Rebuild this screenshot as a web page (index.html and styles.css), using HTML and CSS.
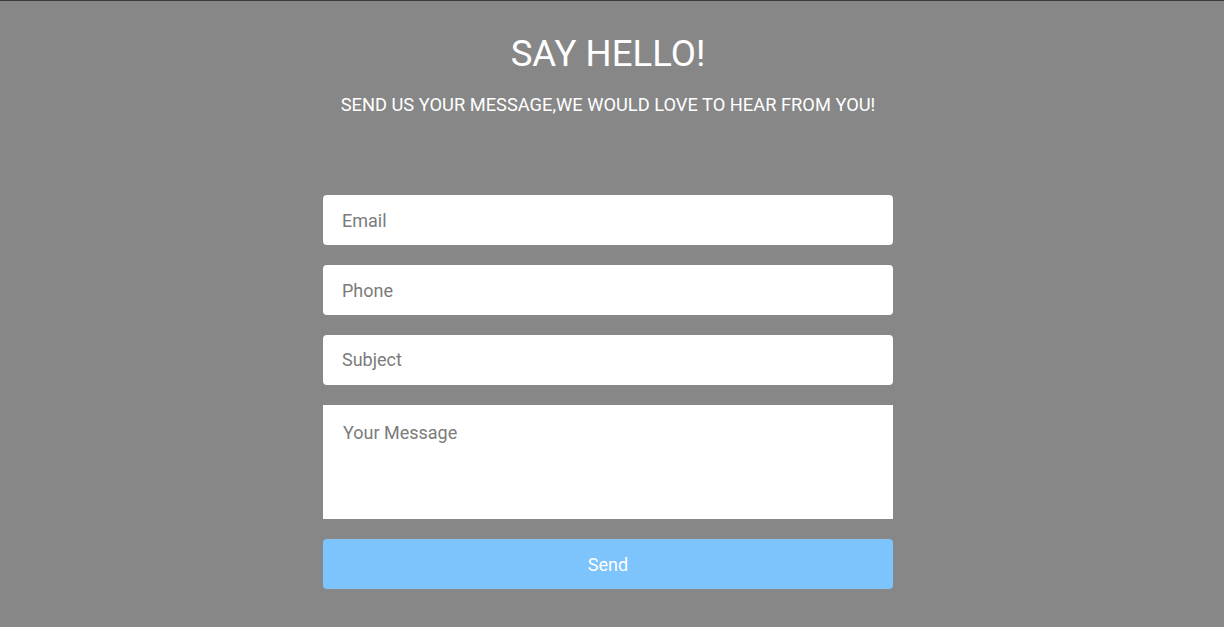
FILE: index.html
```html
<!DOCTYPE html>
<html>
<head>
<meta charset="utf-8">
<link rel="stylesheet" href="styles.css">
</head>
<body>
<div class="page">
  <div class="contact">
    <h1 class="title">SAY HELLO!</h1>
    <p class="subtitle">SEND US YOUR MESSAGE,WE WOULD LOVE TO HEAR FROM YOU!</p>
    <form class="form">
      <input class="field" type="text" placeholder="Email">
      <input class="field" type="text" placeholder="Phone">
      <input class="field subject" type="text" placeholder="Subject">
      <textarea class="field message" placeholder="Your Message"></textarea>
      <button class="send" type="button">Send</button>
    </form>
  </div>
</div>
</body>
</html>
```
FILE: styles.css
```css
html, body {
  margin: 0;
  padding: 0;
  height: 100%;
}
body {
  background: #878787;
  border-top: 1px solid #3a3a3a;
  box-sizing: border-box;
  font-family: Roboto, "Liberation Sans", sans-serif;
  overflow: hidden;
}
.page {
  padding-right: 8px;
}
.contact {
  width: 570px;
  margin: 0 auto;
  display: flex;
  flex-direction: column;
  align-items: center;
}
.title {
  margin: 31px 0 0;
  font-weight: 400;
  font-size: 36.6px;
  line-height: 44px;
  color: #fff;
  white-space: nowrap;
}
.subtitle {
  margin: 17px 0 0;
  font-size: 18.3px;
  line-height: 24px;
  color: #fff;
  white-space: nowrap;
}
.form {
  width: 100%;
  margin-top: 78px;
  display: flex;
  flex-direction: column;
  gap: 20px;
}
.field {
  display: block;
  box-sizing: border-box;
  width: 100%;
  height: 50px;
  border: none;
  border-radius: 4px;
  background: #fff;
  padding: 0 19px;
  font-family: Roboto, "Liberation Sans", sans-serif;
  font-size: 18px;
  color: #333;
  outline: none;
}
.field::placeholder {
  color: #7b7b7b;
}
.subject {
  padding-bottom: 2px;
}
.message {
  height: 114px;
  border-radius: 0;
  padding: 16px 20px;
  resize: none;
  line-height: 24px;
}
.send {
  height: 50px;
  border: none;
  border-radius: 4px;
  background: #7dc3fc;
  color: #fff;
  font-family: Roboto, "Liberation Sans", sans-serif;
  font-size: 18px;
}
```
